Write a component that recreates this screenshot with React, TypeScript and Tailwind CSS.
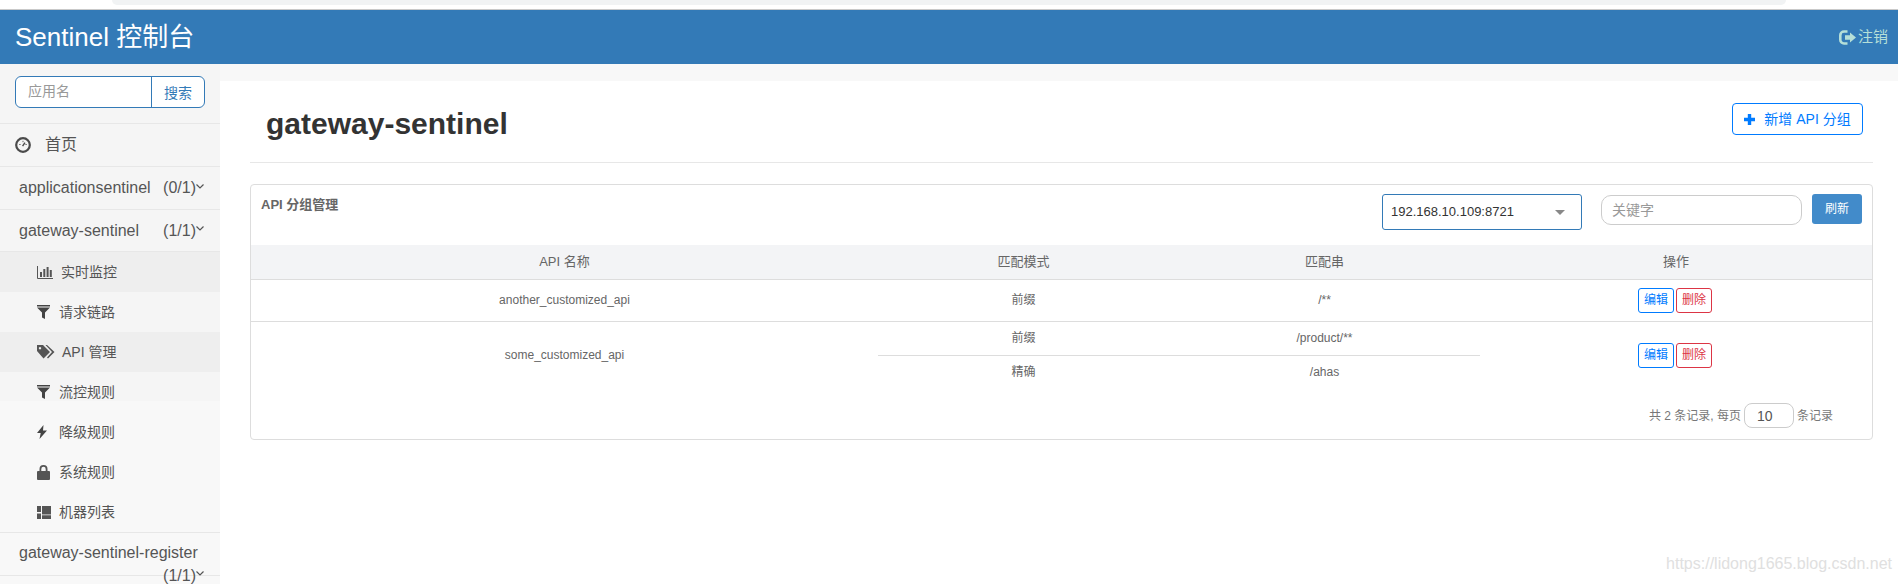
import React from "react";

const FONT = "font-['Liberation_Sans','Noto_Sans_CJK_SC',sans-serif]";

function Dash() {
  return (
    <svg width="16" height="16" viewBox="0 0 16 16" className="shrink-0">
      <circle cx="8" cy="8" r="6.800" fill="none" stroke="#4a4a4a" strokeWidth="2.200" />
      <path d="M4.200 7.500h1.400M10.400 7.500h1.400M8 3.800v1.400" stroke="#666" strokeWidth="1" />
      <path d="M7.600 9.200 10 5.600" stroke="#4a4a4a" strokeWidth="1.400" />
    </svg>
  );
}
function Stats() {
  return (
    <svg width="16" height="13" viewBox="0 0 16 13" className="shrink-0">
      <path d="M.5 0v12.500H16" fill="none" stroke="#555" />
      <path d="M3 6h2v5H3zM6.300 3h2v8h-2zM9.600 1h2v10h-2zM12.800 4h2v7h-2z" fill="#555" />
    </svg>
  );
}
function Filter() {
  return (
    <svg width="13" height="14" viewBox="0 0 13 14" className="shrink-0">
      <path d="M0 0h13v1.500H0zM0 2.500h13L8 7.500V14l-3-1.500v-5z" fill="#444" />
    </svg>
  );
}
function Tags() {
  return (
    <svg width="18" height="14" viewBox="0 0 18 14" className="shrink-0">
      <path fillRule="evenodd" d="M0 0h6l7 7-6.500 6.500L0 6zM3 2a1.200 1.200 0 1 0 .01 0z" fill="#555" />
      <path d="M8.500 0h1.500l7.500 7-6.500 6.500-1-1L15 7z" fill="#555" />
    </svg>
  );
}
function Bolt() {
  return (
    <svg width="10" height="14" viewBox="0 0 10 14" className="shrink-0">
      <path d="M6.500 0 0 8h3.700L2.500 14 10 5.500H6z" fill="#444" />
    </svg>
  );
}
function Lock() {
  return (
    <svg width="13" height="15" viewBox="0 0 13 15" className="shrink-0">
      <path fillRule="evenodd" d="M2.500 6V4a4 4 0 0 1 8 0v2H12a1 1 0 0 1 1 1v7a1 1 0 0 1-1 1H1a1 1 0 0 1-1-1V7a1 1 0 0 1 1-1zM4.300 6h4.400V4a2.200 2.200 0 0 0-4.400 0z" fill="#555" />
    </svg>
  );
}
function ThList() {
  return (
    <svg width="14" height="13" viewBox="0 0 14 13" className="shrink-0">
      <path d="M0 0h4v6H0zM0 7.500h4V13H0zM5 0h9v8.500H5zM5 9.200h9V13H5z" fill="#555" />
    </svg>
  );
}
function LogOut() {
  return (
    <svg width="17" height="15" viewBox="0 0 17 15" className="shrink-0">
      <path d="M8.500 1.500H5A3.700 3.700 0 0 0 1.300 5.200v4.600A3.700 3.700 0 0 0 5 13.500h3.500" fill="none" stroke="#b5dfd8" strokeWidth="2.600" />
      <path d="M6 5.300h5V2.500l6 5-6 5V9.700H6z" fill="#b5dfd8" />
    </svg>
  );
}
function Chevron() {
  return (
    <svg width="8" height="5" viewBox="0 0 8 5" className="mb-[4px] shrink-0">
      <path d="M.5.500 4 4 7.500.500" fill="none" stroke="#555" strokeWidth="1.200" />
    </svg>
  );
}

function AppRow({ name, count, height }: { name: string; count: string; height: string }) {
  return (
    <div className={`flex items-center border-b border-[#e7e7e7] pl-[19px] pr-[16px] text-[16px] text-[#555] ${height}`}>
      <span className="flex-1">{name}</span>
      <span>{count}</span>
      <Chevron />
    </div>
  );
}

function SubRow({ icon, label, active, gap }: { icon: React.ReactNode; label: string; active?: boolean; gap: string }) {
  return (
    <div className={`flex h-[40px] items-center pl-[37px] text-[14px] text-[#555] ${gap} ${active ? "bg-[#eeeeee]" : ""}`}>
      {icon}
      <span>{label}</span>
    </div>
  );
}

function Sidebar() {
  return (
    <aside className="w-[220px] shrink-0 bg-[linear-gradient(#f5f5f5_337px,#f8f8f8_337px)]">
      <div className="h-[60px] border-b border-[#e7e7e7] pl-[15px] pt-[12px]">
        <div className="flex h-[32px] w-[190px] overflow-hidden rounded-[6px] border border-[#337ab7] bg-white text-[14px]">
          <div className="flex-1 border-r border-[#337ab7] pl-[12px] leading-[28px] text-[#999]">应用名</div>
          <div className="w-[52px] text-center leading-[32px] text-[#337ab7]">搜索</div>
        </div>
      </div>
      <div className="flex h-[43px] items-center gap-[14px] border-b border-[#e7e7e7] pl-[15px] text-[16px] text-[#555]">
        <Dash />
        <span>首页</span>
      </div>
      <AppRow name="applicationsentinel" count="(0/1)" height="h-[43px]" />
      <AppRow name="gateway-sentinel" count="(1/1)" height="h-[42px]" />
      <div className="border-b border-[#e7e7e7]">
        <SubRow icon={<Stats />} label="实时监控" active gap="gap-[8px]" />
        <SubRow icon={<Filter />} label="请求链路" gap="gap-[9px]" />
        <SubRow icon={<Tags />} label="API 管理" active gap="gap-[7px]" />
        <SubRow icon={<Filter />} label="流控规则" gap="gap-[9px]" />
        <SubRow icon={<Bolt />} label="降级规则" gap="gap-[12px]" />
        <SubRow icon={<Lock />} label="系统规则" gap="gap-[9px]" />
        <SubRow icon={<ThList />} label="机器列表" gap="gap-[8px]" />
      </div>
      <div className="h-[43px] border-b border-[#e7e7e7] pl-[19px] pr-[16px] pt-[8px] text-[16px] leading-[23px] text-[#555]">
        <div>gateway-sentinel-register</div>
        <div className="flex items-center justify-end">
          <span>(1/1)</span>
          <Chevron />
        </div>
      </div>
    </aside>
  );
}

function ActionButtons() {
  return (
    <div className="flex justify-center gap-[2px] pr-[2px]">
      <button className="h-[25px] w-[36px] rounded-[3px] border border-[#007bff] text-[12px] text-[#007bff]">编辑</button>
      <button className="h-[25px] w-[36px] rounded-[3px] border border-[#dc3545] text-[12px] text-[#dc3545]">删除</button>
    </div>
  );
}

function Content() {
  return (
    <main className="min-w-0 flex-1 pt-[17px]">
      <div className="h-[503px] bg-white pl-[30px] pr-[25px]">
        <div className="flex h-[82px] items-start justify-between border-b border-[#e7e7e7]">
          <h1 className="pl-[16px] pt-[25px] text-[30px] font-bold leading-[36px] text-[#333]">gateway-sentinel</h1>
          <button className="mr-[10px] mt-[22px] flex h-[32px] w-[131px] items-center justify-center gap-[9px] rounded-[4px] border border-[#007bff] text-[14px] text-[#007bff]">
            <svg width="11" height="11" viewBox="0 0 11 11">
              <path d="M3.800 0h3.400v3.800H11v3.400H7.200V11H3.800V7.200H0V3.800h3.800z" fill="#007bff" />
            </svg>
            <span>新增 API 分组</span>
          </button>
        </div>
        <section className="mt-[21px] h-[256px] rounded-[4px] border border-[#dddddd]">
          <div className="flex h-[60px] items-start">
            <div className="flex-1 pl-[10px] pt-[11px] text-[13px] font-bold leading-[18px] text-[#666]">API 分组管理</div>
            <div className="mt-[9px] flex h-[36px] w-[200px] items-center justify-between rounded-[3px] border border-[#337ab7] pl-[8px] pr-[16px] text-[13px] text-[#333]">
              <span>192.168.10.109:8721</span>
              <span className="h-0 w-0 border-x-[5px] border-t-[5px] border-x-transparent border-t-[#888]" />
            </div>
            <div className="ml-[19px] mt-[10px] h-[30px] w-[201px] rounded-[10px] border border-[#cccccc] pl-[10px] text-[14px] leading-[28px] text-[#999]">关键字</div>
            <button className="ml-[10px] mr-[10px] mt-[9px] h-[30px] w-[50px] rounded-[3px] bg-[#428bca] text-[12px] text-white">刷新</button>
          </div>
          <table className="w-full table-fixed border-collapse text-center text-[12px] text-[#666]">
            <colgroup>
              <col className="w-[627px]" />
              <col className="w-[291px]" />
              <col className="w-[311px]" />
              <col />
            </colgroup>
            <thead>
              <tr className="h-[34px] border-b border-[#dddddd] bg-[#f3f4f6] text-[13px]">
                <th className="font-normal">API 名称</th>
                <th className="font-normal">匹配模式</th>
                <th className="font-normal">匹配串</th>
                <th className="font-normal">操作</th>
              </tr>
            </thead>
            <tbody>
              <tr className="h-[42px] border-b border-[#dddddd]">
                <td>another_customized_api</td>
                <td>前缀</td>
                <td>/**</td>
                <td><ActionButtons /></td>
              </tr>
              <tr className="h-[34px]">
                <td rowSpan={2}>some_customized_api</td>
                <td className="border-b border-[#dddddd]">前缀</td>
                <td className="border-b border-[#dddddd]">/product/**</td>
                <td rowSpan={2}><ActionButtons /></td>
              </tr>
              <tr className="h-[34px]">
                <td>精确</td>
                <td>/ahas</td>
              </tr>
            </tbody>
          </table>
          <div className="mt-[14px] flex items-center justify-end gap-[3px] pr-[39px] text-[12px] text-[#777]">
            <span>共 2 条记录, 每页</span>
            <div className="h-[25px] w-[50px] rounded-[8px] border border-[#cccccc] pl-[12px] text-[14px] leading-[25px] text-[#555]">10</div>
            <span>条记录</span>
          </div>
        </section>
      </div>
    </main>
  );
}

export default function App() {
  return (
    <div className={`relative h-[584px] w-[1898px] overflow-hidden bg-[#f8f8f8] ${FONT}`}>
      <div className="h-[10px] border-b border-[#c9c9c9] bg-white">
        <div className="mx-[112px] h-[5px] rounded-b-[8px] bg-[#f1f3f4]" />
      </div>
      <header className="flex h-[54px] items-center justify-between bg-[#337ab7] pl-[15px] pr-[10px]">
        <span className="text-[26px] text-white">Sentinel 控制台</span>
        <span className="flex items-center gap-[2px] text-[15px] text-[#b5dfd8]">
          <LogOut />
          注销
        </span>
      </header>
      <div className="flex h-[520px]">
        <Sidebar />
        <Content />
      </div>
      <div className="absolute bottom-[8px] right-[6px] text-[16px] text-[#e0e0e0]">https://lidong1665.blog.csdn.net</div>
    </div>
  );
}
